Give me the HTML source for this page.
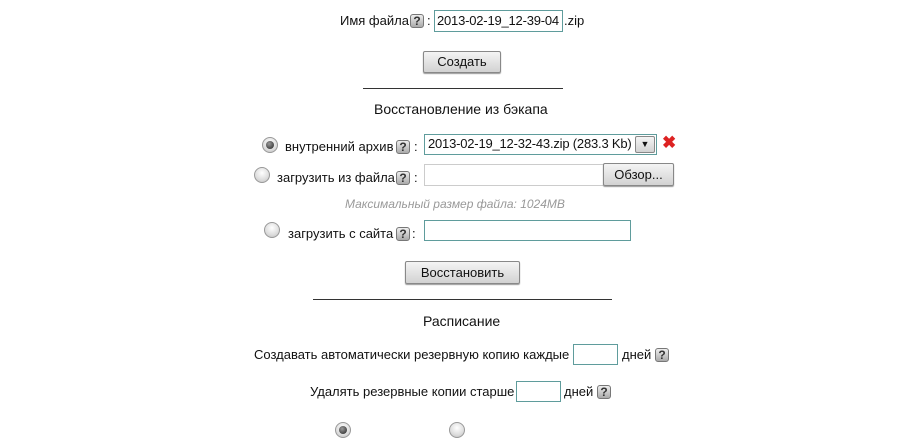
<!DOCTYPE html>
<html><head><meta charset="utf-8"><style>
*{margin:0;padding:0;box-sizing:border-box}
body{width:900px;height:429px;background:#fff;position:relative;overflow:hidden;font-family:"Liberation Sans",Arial,sans-serif;font-size:13px;color:#111}
div{white-space:nowrap}
.a{position:absolute;line-height:16px}
.q{position:absolute;width:14px;height:14px;border:1px solid #777;border-radius:3px;background:linear-gradient(#eee,#aaa);font-size:12px;font-weight:bold;line-height:12px;text-align:center;color:#333}
.in{position:absolute;border:1px solid #5f9c9c;background:#fff;font-size:13px;line-height:19px;padding-left:3px;overflow:hidden}
.btn{position:absolute;border:1px solid #888;border-radius:2px;background:linear-gradient(#f4f4f4,#d2d2d2);text-align:center;font-size:13px;box-shadow:0 1px 1px #999}
.hr{position:absolute;height:1px;background:#333}
.r{position:absolute;width:16px;height:16px;border-radius:50%;border:1px solid #999;background:radial-gradient(circle at 50% 35%,#fff,#ddd 60%,#bbb)}
.r.on::after{content:"";position:absolute;left:3px;top:3px;width:8px;height:8px;border-radius:50%;background:radial-gradient(circle at 40% 35%,#999,#222)}
</style></head><body>
<div class="a" style="left:340px;top:13px">Имя файла</div>
<div class="q" style="left:410px;top:14px">?</div>
<div class="a" style="left:427px;top:13px">:</div>
<div class="in" style="left:434px;top:10px;width:129px;height:22px;padding-left:2px;letter-spacing:-0.2px">2013-02-19_12-39-04</div>
<div class="a" style="left:564px;top:13px">.zip</div>
<div class="btn" style="left:423px;top:51px;width:78px;height:22px;line-height:20px">Создать</div>
<div class="hr" style="left:363px;top:88px;width:200px"></div>
<div class="a" style="left:374px;top:101px;font-size:14px">Восстановление из бэкапа</div>

<div class="r on" style="left:262px;top:137px"></div>
<div class="a" style="left:285px;top:139px">внутренний архив</div>
<div class="q" style="left:396px;top:140px">?</div>
<div class="a" style="left:414px;top:139px">:</div>
<div class="in" style="left:424px;top:134px;width:233px;height:21px;line-height:18px;letter-spacing:-0.2px">2013-02-19_12-32-43.zip (283.3 Kb)</div>
<div class="btn" style="left:635px;top:136px;width:20px;height:17px;box-shadow:none;font-size:9px;line-height:15px">&#9660;</div>
<div class="a" style="left:662px;top:135px;color:#d22;font-size:17px;font-weight:bold">✖</div>

<div class="r" style="left:254px;top:167px"></div>
<div class="a" style="left:277px;top:170px">загрузить из файла</div>
<div class="q" style="left:396px;top:171px">?</div>
<div class="a" style="left:414px;top:170px">:</div>
<div class="in" style="left:424px;top:164px;width:180px;height:22px;border-color:#ccc"></div>
<div class="btn" style="left:603px;top:163px;width:71px;height:23px;line-height:21px">Обзор...</div>
<div class="a" style="left:345px;top:196px;color:#999;font-style:italic;font-size:12px">Максимальный размер файла: 1024MB</div>

<div class="r" style="left:264px;top:222px"></div>
<div class="a" style="left:288px;top:226px">загрузить с сайта</div>
<div class="q" style="left:396px;top:227px">?</div>
<div class="a" style="left:412px;top:226px">:</div>
<div class="in" style="left:424px;top:220px;width:207px;height:21px"></div>
<div class="btn" style="left:405px;top:261px;width:115px;height:23px;line-height:21px">Восстановить</div>
<div class="hr" style="left:313px;top:299px;width:299px"></div>
<div class="a" style="left:423px;top:313px;font-size:14px">Расписание</div>

<div class="a" style="left:254px;top:347px">Создавать автоматически резервную копию каждые</div>
<div class="in" style="left:573px;top:344px;width:45px;height:21px"></div>
<div class="a" style="left:622px;top:347px">дней</div>
<div class="q" style="left:655px;top:348px">?</div>

<div class="a" style="left:310px;top:384px">Удалять резервные копии старше</div>
<div class="in" style="left:516px;top:381px;width:45px;height:21px"></div>
<div class="a" style="left:564px;top:384px">дней</div>
<div class="q" style="left:597px;top:385px">?</div>

<div class="r on" style="left:335px;top:422px"></div>
<div class="r" style="left:449px;top:422px"></div>
</body></html>
